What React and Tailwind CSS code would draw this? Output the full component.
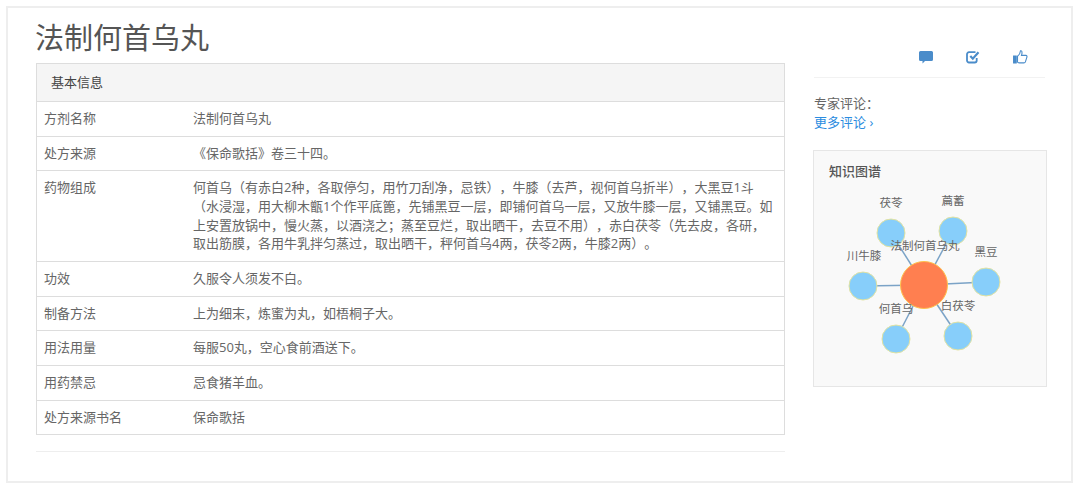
import React from "react";

const rows = [
  ["方剂名称", "法制何首乌丸"],
  ["处方来源", "《保命歌括》卷三十四。"],
  [
    "药物组成",
    "何首乌（有赤白2种，各取停匀，用竹刀刮净，忌铁），牛膝（去芦，视何首乌折半），大黑豆1斗（水浸湿，用大柳木甑1个作平底篦，先铺黑豆一层，即铺何首乌一层，又放牛膝一层，又铺黑豆。如上安置放锅中，慢火蒸，以酒浇之；蒸至豆烂，取出晒干，去豆不用），赤白茯苓（先去皮，各研，取出筋膜，各用牛乳拌匀蒸过，取出晒干，秤何首乌4两，茯苓2两，牛膝2两）。",
  ],
  ["功效", "久服令人须发不白。"],
  ["制备方法", "上为细末，炼蜜为丸，如梧桐子大。"],
  ["用法用量", "每服50丸，空心食前酒送下。"],
  ["用药禁忌", "忌食猪羊血。"],
  ["处方来源书名", "保命歌括"],
];

// panel-local coordinates (panel box starts at 813,151)
const center = { x: 111, y: 135 };
const nodes = [
  { x: 78, y: 83, label: "茯苓", lx: 78, ly: 57 },
  { x: 140, y: 81, label: "萹蓄", lx: 140, ly: 55 },
  { x: 173, y: 132, label: "黑豆", lx: 173, ly: 106 },
  { x: 145, y: 186, label: "白茯苓", lx: 145, ly: 160 },
  { x: 83, y: 189, label: "何首乌", lx: 83, ly: 163 },
  { x: 50, y: 136, label: "川牛膝", lx: 51, ly: 110 },
];

function KnowledgeGraph() {
  return (
    <svg width="232" height="234" className="absolute left-[-1px] top-[-1px]">
      {nodes.map((n) => (
        <line key={n.label} x1={center.x} y1={center.y} x2={n.x} y2={n.y} stroke="#7ba3c7" strokeWidth="1.5" />
      ))}
      {nodes.map((n) => (
        <circle key={n.label} cx={n.x} cy={n.y} r="14" fill="#87cefa" stroke="#e3e3a0" strokeWidth="1" />
      ))}
      <circle cx={center.x} cy={center.y} r="23.5" fill="#ff7f50" stroke="#ffc04d" strokeWidth="1" />
      {nodes.map((n) => (
        <text key={n.label} x={n.lx} y={n.ly} textAnchor="middle" fontSize="11.5" fill="#666">
          {n.label}
        </text>
      ))}
      <text x="112" y="100" textAnchor="middle" fontSize="11.5" fill="#666">
        法制何首乌丸
      </text>
    </svg>
  );
}

function CommentIcon() {
  return (
    <svg width="14" height="13" viewBox="0 0 14 13">
      <path d="M1.500 0h11A1.500 1.500 0 0 1 14 1.500v7a1.500 1.500 0 0 1-1.500 1.500H6l-2.500 2.600V10h-2A1.500 1.500 0 0 1 0 8.500v-7A1.500 1.500 0 0 1 1.500 0z" fill="#4a8cca" />
    </svg>
  );
}

function CheckIcon() {
  return (
    <svg width="14" height="14" viewBox="0 0 14 14" fill="none" stroke="#4a8cca">
      <path d="M10.700 8v2.500a2 2 0 0 1-2 2H3a2 2 0 0 1-2-2V4.200a2 2 0 0 1 2-2h6.500" strokeWidth="1.800" />
      <path d="M4.300 6l2.500 2.700 5.700-6.500" strokeWidth="2.200" />
    </svg>
  );
}

function ThumbIcon() {
  return (
    <svg width="15" height="14" viewBox="0 0 15 14" fill="none" stroke="#4a8cca" strokeWidth="1.100">
      <path d="M0.600 6h2.600v7H0.600z" fill="#4a8cca" />
      <path d="M4.500 6.200c1.500-1 2.800-2.800 3-5.400 1.500-.4 2 1.500 1 4.600h4.400c1 0 1.300 1 1 1.800l-1.500 4.700c-.3.800-.8 1-1.500 1H6.500c-.8 0-1.400-.3-2-.8z" />
    </svg>
  );
}

export default function App() {
  return (
    <div className="w-[1080px] h-[494px] bg-white pt-[6px] pl-[6px] font-['Open_Sans','Noto_Sans_CJK_SC',sans-serif] text-[13px] leading-[18.6px] text-[#666] [text-spacing-trim:space-all]">
      <div className="w-[1067px] h-[477px] border-2 border-[#eee] flex gap-[27px] pl-[28px]">
        <div className="w-[749px]">
          <h1 className="h-[55px] pt-[12px] -ml-px text-[29px] leading-[36px] font-normal text-[#555]">法制何首乌丸</h1>
          <div className="border border-[#ddd]">
            <div className="h-[37px] bg-[#f5f5f5] pl-[14px] flex items-center text-[#444]">基本信息</div>
            {rows.map(([label, value]) => (
              <div key={label} className="grid grid-cols-[149px_1fr] border-t border-[#ddd] pl-[7px] pr-[7px] pt-[7px] pb-[8.1px]">
                <div>{label}</div>
                <div>{value}</div>
              </div>
            ))}
          </div>
          <div className="mt-[16px] border-t border-[#eee]" />
        </div>
        <div className="w-[235px] pl-[1px]">
          <div className="h-[70px] ml-[1px] w-[231px] border-b border-[#f2f2f2] flex items-end justify-end gap-[33px] pr-[17px] pb-[13px]">
            <CommentIcon />
            <CheckIcon />
            <ThumbIcon />
          </div>
          <div className="ml-[1px] mt-[16px]">专家评论：</div>
          <div className="ml-[1px] text-[#2b8ce0]">更多评论 ›</div>
          <div className="relative mt-[19px] h-[237px] bg-[#f9f9f9] border border-[#e6e6e6]">
            <div className="pl-[15px] pt-[11px] font-medium text-[13px] text-[#555]">知识图谱</div>
            <KnowledgeGraph />
          </div>
        </div>
      </div>
    </div>
  );
}
